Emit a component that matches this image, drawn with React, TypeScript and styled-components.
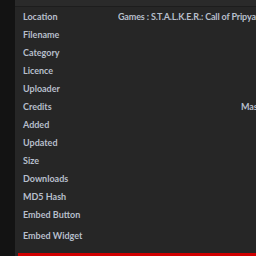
import React from "react";
import styled, { createGlobalStyle } from "styled-components";

const Global = createGlobalStyle`
  html, body { margin: 0; padding: 0; background: #141414; overflow: hidden; }
  body { font-family: "Lato", "Liberation Sans", sans-serif; }
`;

const Page = styled.div`
  display: flex;
  width: 256px;
  height: 256px;
  overflow: hidden;
`;

const Gutter = styled.div`
  width: 15px;
  flex: none;
  background: #131313;
`;

const Panel = styled.div`
  flex: 1;
  display: flex;
  flex-direction: column;
  background: #262626;
  min-width: 0;
`;

const TopStrip = styled.div`
  height: 6px;
  background: #2a2a2a;
  border-bottom: 1px solid #1d1d1d;
  flex: none;
`;

const Table = styled.div`
  display: flex;
  flex-direction: column;
  flex: 1;
`;

const Row = styled.div<{ $h?: number }>`
  display: flex;
  align-items: center;
  height: ${(p) => p.$h ?? 18}px;
  white-space: nowrap;
`;

const Label = styled.div`
  width: 103px;
  flex: none;
  padding-left: 8px;
  box-sizing: border-box;
  color: #b7bfcb;
  font-weight: 700;
  font-size: 9px;
`;

const Value = styled.div<{ $indent?: number }>`
  color: #b7bfcb;
  font-weight: 700;
  font-size: 9px;
  letter-spacing: -0.15px;
  padding-left: ${(p) => p.$indent ?? 0}px;
  overflow: hidden;
`;

const RedBar = styled.div`
  height: 3px;
  margin-left: 3px;
  background: #d00000;
  flex: none;
`;

const rows: { label: string; value?: string; indent?: number; h?: number }[] = [
  { label: "Location", value: "Games : S.T.A.L.K.E.R.: Call of Pripyat" },
  { label: "Filename" },
  { label: "Category" },
  { label: "Licence" },
  { label: "Uploader" },
  { label: "Credits", value: "Mas", indent: 123 },
  { label: "Added" },
  { label: "Updated" },
  { label: "Size" },
  { label: "Downloads" },
  { label: "MD5 Hash" },
  { label: "Embed Button" },
  { label: "Embed Widget", h: 24 },
];

export default function App() {
  return (
    <>
      <Global />
      <Page>
        <Gutter />
        <Panel>
          <TopStrip />
          <Table>
            {rows.map((r) => (
              <Row key={r.label} $h={r.h}>
                <Label>{r.label}</Label>
                {r.value && <Value $indent={r.indent}>{r.value}</Value>}
              </Row>
            ))}
          </Table>
          <RedBar />
        </Panel>
      </Page>
    </>
  );
}
